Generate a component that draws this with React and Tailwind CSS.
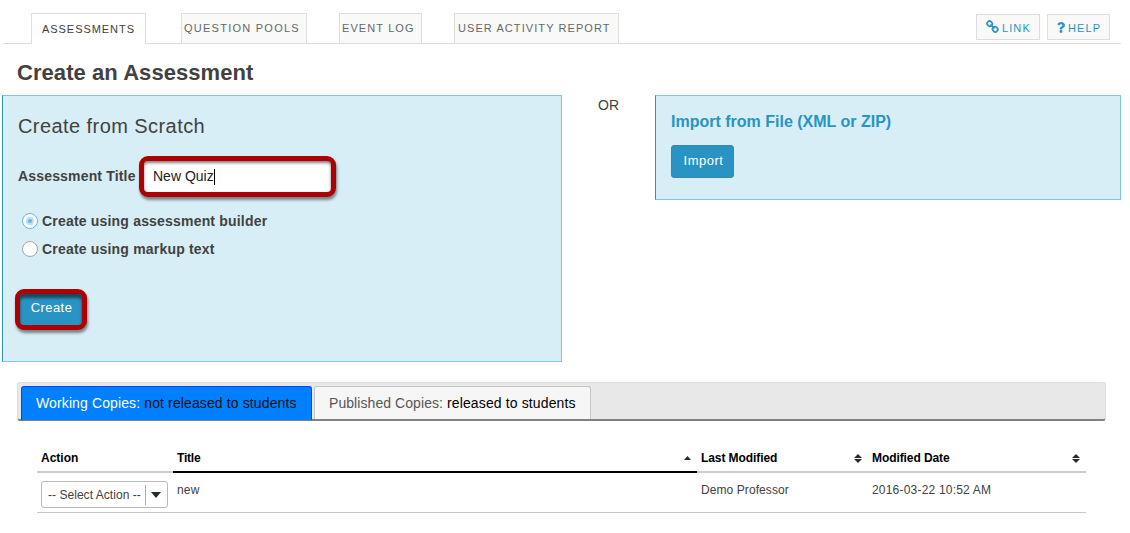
import { FaQuestion } from "react-icons/fa";

function NavTab({ children, className }) {
  return (
    <a className={`h-[30px] shrink-0 border border-b-0 border-[#ddd] text-[11px] leading-[29px] whitespace-nowrap ${className}`}>
      {children}
    </a>
  );
}

function ToolButton({ icon, children, className }) {
  return (
    <button className={`flex h-[26px] items-center border border-[#ddd] bg-[#f9f9f8] text-[11px] text-[#2994c3] ${className}`}>
      {icon}
      <span className="pt-[2px] leading-[24px] tracking-[1.1px]">{children}</span>
    </button>
  );
}

function ChainIcon() {
  return (
    <svg className="mr-[3px] -mt-[2px] size-[13px]" viewBox="0 0 13 13" fill="none" stroke="#2994c3" strokeWidth="1.7" strokeLinecap="round">
      <rect x="1.1" y="1.3" width="5.2" height="4.8" rx="2.2" transform="rotate(45 3.7 3.7)" />
      <rect x="6.6" y="6.9" width="5.2" height="4.8" rx="2.2" transform="rotate(45 9.2 9.3)" />
      <path d="M5 5 L8 8" />
    </svg>
  );
}

function SortBoth() {
  return (
    <svg className="mt-[1px] h-[9px] w-[8px]" viewBox="0 0 8 9" fill="#222c31">
      <path d="M4 0 L8 4 H0 Z M0 5 H8 L4 9 Z" />
    </svg>
  );
}

function Radio({ checked, label }) {
  return (
    <label className="flex h-[28px] items-center">
      <span className={`flex size-4 items-center justify-center rounded-full border bg-white ${checked ? "border-[#62b5e0]" : "border-[#a5a5a5]"}`}>
        {checked && (
          <span className="flex size-2 items-center justify-center rounded-full bg-[#b9e2f2]">
            <span className="size-1 rounded-full bg-[#62b9dc]" />
          </span>
        )}
      </span>
      <span className="ml-1 text-[14px] font-bold tracking-[0.19px] whitespace-nowrap">{label}</span>
    </label>
  );
}

export default function App() {
  return (
    <div className="h-[533px] w-[1130px] overflow-hidden bg-white font-['Liberation_Sans',Arial,sans-serif] text-[#414141]">
      <header className="mr-[9px] ml-[3px] flex h-[44px] border-b border-[#ddd] pt-[13px]">
        <nav className="flex text-[#63686b]">
          <NavTab className="relative ml-[28px] h-[31px] w-[115px] bg-white pl-[10px] leading-[31px] tracking-[0.95px] text-[#414141]">ASSESSMENTS</NavTab>
          <NavTab className="ml-[35px] w-[126px] bg-[#f9f9f8] pl-[2px] tracking-[1.25px]">QUESTION POOLS</NavTab>
          <NavTab className="ml-[32px] w-[83px] bg-[#f9f9f8] pl-[2px] tracking-[1.1px]">EVENT LOG</NavTab>
          <NavTab className="ml-[32px] w-[165px] bg-[#f9f9f8] pl-[3px] tracking-[1.08px]">USER ACTIVITY REPORT</NavTab>
        </nav>
        <div className="mt-px mr-[11px] ml-auto flex gap-[7px]">
          <ToolButton className="w-[64px] pl-[9px]" icon={<ChainIcon />}>LINK</ToolButton>
          <ToolButton className="w-[63px] pl-[8px]" icon={<FaQuestion className="mr-[2px] h-[11px] w-[10px]" />}>HELP</ToolButton>
        </div>
      </header>

      <h1 className="mt-[16px] ml-[17px] h-[35px] text-[22px] leading-[26px] font-bold tracking-[0.06px] whitespace-nowrap">Create an Assessment</h1>

      <main className="ml-[2px] flex h-[267px] items-start">
        <section className="h-[267px] w-[560px] border border-[#7fc6e1] border-l-[#2994c3] bg-[#d8eef6] pl-[15px]">
          <h2 className="mt-[18px] text-[20px] leading-[24px] tracking-[0.43px]">Create from Scratch</h2>
          <div className="mt-[18px] flex h-[41px]">
            <label className="w-[121px] text-[14px] leading-[40px] font-bold tracking-[0.17px] whitespace-nowrap">Assessment Title</label>
            <div className="relative h-[41px] w-[197px] rounded-[9px] border-[5px] border-[#ad0000] bg-white shadow-[1px_3px_3px_rgba(0,0,0,0.45),inset_0_2px_3px_rgba(0,0,0,0.5)]">
              <div className="flex h-full items-center pl-[9px] text-[14px] text-[#222]">
                <span className="whitespace-nowrap">New Quiz</span>
                <span className="h-4 w-px bg-black" />
              </div>
            </div>
          </div>
          <div className="mt-[10px] ml-[4px]">
            <Radio checked label="Create using assessment builder" />
            <Radio label="Create using markup text" />
          </div>
          <button className="mt-[26px] -ml-[3px] block h-[41px] w-[72px] rounded-[9px] border-[5px] border-[#ad0000] bg-[#2994c3] pb-[3px] pl-[1px] text-[13px] tracking-[0.45px] text-white shadow-[1px_3px_3px_rgba(0,0,0,0.45),inset_0_4px_3px_rgba(0,0,0,0.5)]">Create</button>
        </section>
        <div className="w-[93px] text-center text-[14px] leading-[20px]">OR</div>
        <section className="h-[105px] w-[466px] border border-[#7fc6e1] border-l-[#2994c3] bg-[#d8eef6] pl-[15px]">
          <h3 className="mt-[16px] h-[33px] text-[16px] leading-[20px] font-bold text-[#2994c3]">Import from File (XML or ZIP)</h3>
          <button className="block h-[33px] w-[63px] rounded-[3px] border border-[#3a86b3] bg-[#2994c3] pb-[2px] pl-[2px] text-[13px] tracking-[0.5px] text-white">Import</button>
        </section>
      </main>

      <div className="mt-[20px] ml-[17px] flex h-[39px] w-[1089px] rounded-[3px] border border-b-2 border-[#ddd] border-b-[#808080] bg-[#e8e8e8] pt-[3px] pl-[3px]">
        <div className="h-[34px] w-[291px] rounded-t-[3px] border border-b-0 border-[#0048ff] bg-[#007fff] pl-[14px] text-[14px] leading-[33px] tracking-[0.12px] whitespace-nowrap">
          <span className="text-white">Working Copies: </span>
          <span className="text-[#111]">not released to students</span>
        </div>
        <div className="ml-[2px] h-[33px] w-[277px] rounded-t-[3px] border border-b-0 border-[#c5c5c5] bg-[#f6f6f6] pl-[14px] text-[14px] leading-[33px] whitespace-nowrap">
          <span className="tracking-[0.07px] text-[#555]">Published Copies: </span>
          <span className="tracking-[0.13px] text-black">released to students</span>
        </div>
      </div>

      <div className="mt-[23px] ml-[37px] grid w-[1049px] grid-cols-[136px_524px_171px_218px] text-[12px]">
        <div className="h-[29px] border-b-2 border-[#ccc] pl-[4px] leading-[28px] font-bold text-black">Action</div>
        <div className="flex h-[29px] items-center justify-between border-b-2 border-black pr-[6px] pl-[4px] font-bold text-black">
          <span className="-tracking-[0.2px]">Title</span>
          <svg className="mt-[1px] h-[4px] w-[7px]" viewBox="0 0 7 4" fill="#222c31"><path d="M3.5 0 L7 4 H0 Z" /></svg>
        </div>
        <div className="flex h-[29px] items-center justify-between border-b-2 border-[#ccc] pr-[6px] pl-[4px] font-bold text-black">
          <span className="-tracking-[0.08px]">Last Modified</span>
          <SortBoth />
        </div>
        <div className="flex h-[29px] items-center justify-between border-b-2 border-[#ccc] pr-[6px] pl-[4px] font-bold text-black">
          <span className="-tracking-[0.08px]">Modified Date</span>
          <SortBoth />
        </div>
        <div className="h-[40px] border-b border-[#c8c8c8] pt-[8px] pl-[4px]">
          <div className="flex h-[27px] w-[127px] items-center rounded-[3px] border border-[#bbb] bg-white pl-[6px]">
            <span className="w-[97px] tracking-[0.04px] whitespace-nowrap">-- Select Action --</span>
            <span className="h-[20px] w-px bg-[#aaa]" />
            <svg className="ml-[5px] h-[6px] w-[10px]" viewBox="0 0 10 6" fill="#222c31"><path d="M0 0 H10 L5 6 Z" /></svg>
          </div>
        </div>
        <div className="h-[40px] border-b border-[#c8c8c8] pl-[4px] leading-[34px] tracking-[0.2px]">new</div>
        <div className="h-[40px] border-b border-[#c8c8c8] pl-[4px] leading-[34px] tracking-[0.08px]">Demo Professor</div>
        <div className="h-[40px] border-b border-[#c8c8c8] pl-[4px] leading-[34px] tracking-[0.2px]">2016-03-22 10:52 AM</div>
      </div>
    </div>
  );
}
